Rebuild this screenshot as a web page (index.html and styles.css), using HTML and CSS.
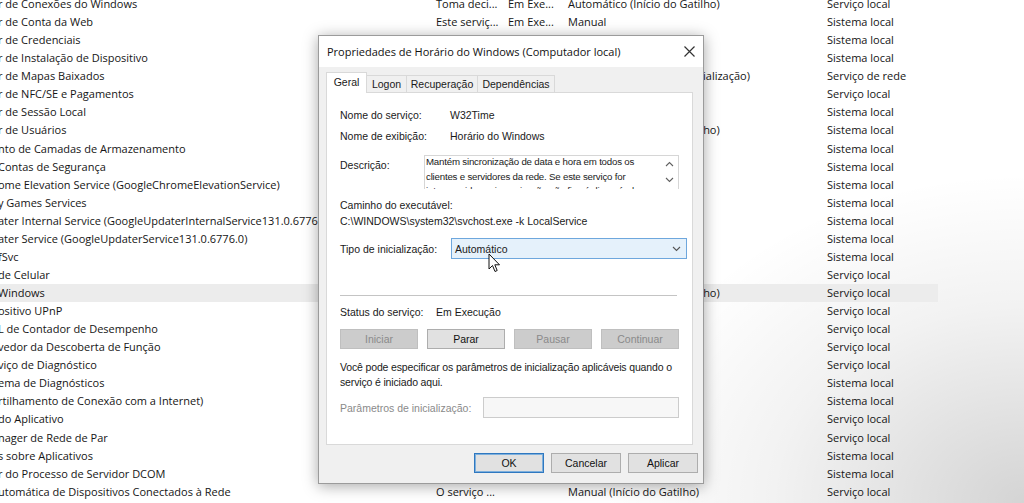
FILE: index.html
```html
<!DOCTYPE html>
<html lang="pt-BR">
<head>
<meta charset="utf-8">
<title>Serviços</title>
<link rel="stylesheet" href="styles.css">
</head>
<body>
<div class="services">
  <div class="row"><span>r de Conexões do Windows</span><span>Toma deci...</span><span>Em Exe...</span><span>Automático (Início do Gatilho)</span><span>Serviço local</span></div>
  <div class="row"><span>r de Conta da Web</span><span>Este serviç...</span><span>Em Exe...</span><span>Manual</span><span>Sistema local</span></div>
  <div class="row"><span>r de Credenciais</span><span></span><span></span><span></span><span>Sistema local</span></div>
  <div class="row"><span>r de Instalação de Dispositivo</span><span></span><span></span><span></span><span>Sistema local</span></div>
  <div class="row"><span>r de Mapas Baixados</span><span></span><span></span><span>Automático (Atraso na Inicialização)</span><span>Serviço de rede</span></div>
  <div class="row"><span>r de NFC/SE e Pagamentos</span><span></span><span></span><span></span><span>Serviço local</span></div>
  <div class="row"><span>r de Sessão Local</span><span></span><span></span><span></span><span>Sistema local</span></div>
  <div class="row"><span>r de Usuários</span><span></span><span></span><span>Automático (Início do Gatilho)</span><span>Sistema local</span></div>
  <div class="row"><span>nto de Camadas de Armazenamento</span><span></span><span></span><span></span><span>Sistema local</span></div>
  <div class="row"><span>Contas de Segurança</span><span></span><span></span><span></span><span>Sistema local</span></div>
  <div class="row"><span>ome Elevation Service (GoogleChromeElevationService)</span><span></span><span></span><span></span><span>Sistema local</span></div>
  <div class="row"><span>y Games Services</span><span></span><span></span><span></span><span>Sistema local</span></div>
  <div class="row"><span>ater Internal Service (GoogleUpdaterInternalService131.0.6776.0)</span><span></span><span></span><span></span><span>Sistema local</span></div>
  <div class="row"><span>ater Service (GoogleUpdaterService131.0.6776.0)</span><span></span><span></span><span></span><span>Sistema local</span></div>
  <div class="row"><span>fSvc</span><span></span><span></span><span></span><span>Sistema local</span></div>
  <div class="row"><span>de Celular</span><span></span><span></span><span></span><span>Serviço local</span></div>
  <div class="row sel"><span>Windows</span><span></span><span></span><span>Automático (Início do Gatilho)</span><span>Serviço local</span></div>
  <div class="row"><span>ositivo UPnP</span><span></span><span></span><span></span><span>Serviço local</span></div>
  <div class="row"><span>L de Contador de Desempenho</span><span></span><span></span><span></span><span>Serviço local</span></div>
  <div class="row"><span>vedor da Descoberta de Função</span><span></span><span></span><span></span><span>Serviço local</span></div>
  <div class="row"><span>viço de Diagnóstico</span><span></span><span></span><span></span><span>Serviço local</span></div>
  <div class="row"><span>ema de Diagnósticos</span><span></span><span></span><span></span><span>Sistema local</span></div>
  <div class="row"><span>rtilhamento de Conexão com a Internet)</span><span></span><span></span><span></span><span>Sistema local</span></div>
  <div class="row"><span>do Aplicativo</span><span></span><span></span><span></span><span>Serviço local</span></div>
  <div class="row"><span>nager de Rede de Par</span><span></span><span></span><span></span><span>Serviço local</span></div>
  <div class="row"><span>s sobre Aplicativos</span><span></span><span></span><span></span><span>Sistema local</span></div>
  <div class="row"><span>r do Processo de Servidor DCOM</span><span></span><span></span><span></span><span>Sistema local</span></div>
  <div class="row"><span>utomática de Dispositivos Conectados à Rede</span><span>O serviço ...</span><span></span><span>Manual (Início do Gatilho)</span><span>Serviço local</span></div>
</div>

<div class="dialog">
  <div class="titlebar">
    <span class="title">Propriedades de Horário do Windows (Computador local)</span>
    <svg class="close" width="11" height="11" viewBox="0 0 11 11"><path d="M0.5 0.5 L10.5 10.5 M10.5 0.5 L0.5 10.5" stroke="#333" stroke-width="1.2" fill="none"/></svg>
  </div>
  <div class="dbody">
    <div class="tabs">
      <div class="tab active t1">Geral</div>
      <div class="tab t2">Logon</div>
      <div class="tab t3">Recuperação</div>
      <div class="tab t4">Dependências</div>
    </div>
    <div class="panel">
      <div class="line"><span class="lbl w110">Nome do serviço:</span><span>W32Time</span></div>
      <div class="line mt5"><span class="lbl w110">Nome de exibição:</span><span>Horário do Windows</span></div>
      <div class="descrow">
        <span class="lbl w84 desclbl">Descrição:</span>
        <div class="descbox">
          <div class="desctext">Mantém sincronização de data e hora em todos os clientes e servidores da rede. Se este serviço for interrompido, a sincronização não ficará disponível para eles.</div>
          <div class="scroll">
            <svg width="9" height="6" viewBox="0 0 9 6"><path d="M1 5 L4.5 1.5 L8 5" stroke="#606060" stroke-width="1.1" fill="none"/></svg>
            <svg width="9" height="6" viewBox="0 0 9 6"><path d="M1 1 L4.5 4.5 L8 1" stroke="#606060" stroke-width="1.1" fill="none"/></svg>
          </div>
        </div>
      </div>
      <div class="line mt8">Caminho do executável:</div>
      <div class="line">C:\WINDOWS\system32\svchost.exe -k LocalService</div>
      <div class="comborow">
        <span class="lbl w111">Tipo de inicialização:</span>
        <div class="combo"><span>Automático</span>
          <svg width="9" height="6" viewBox="0 0 9 6"><path d="M1 1 L4.5 4.5 L8 1" stroke="#555" stroke-width="1.1" fill="none"/></svg>
        </div>
      </div>
      <div class="sep"></div>
      <div class="line mt8"><span class="lbl w96">Status do serviço:</span><span>Em Execução</span></div>
      <div class="svcbtns">
        <div class="btn disabled">Iniciar</div>
        <div class="btn">Parar</div>
        <div class="btn disabled">Pausar</div>
        <div class="btn disabled">Continuar</div>
      </div>
      <p class="hint">Você pode especificar os parâmetros de inicialização aplicáveis quando o serviço é iniciado aqui.</p>
      <div class="paramrow">
        <span class="lbl w143 dim">Parâmetros de inicialização:</span>
        <div class="param"></div>
      </div>
    </div>
    <div class="footer">
      <div class="btn fbtn default">OK</div>
      <div class="btn fbtn">Cancelar</div>
      <div class="btn fbtn">Aplicar</div>
    </div>
  </div>
</div>

<svg class="cursor" width="13" height="20" viewBox="0 0 13 20">
  <path d="M1 1 L1 16 L4.5 12.5 L7 18.5 L9.2 17.5 L6.8 11.8 L11.5 11.8 Z" fill="#fff" stroke="#111" stroke-width="1" stroke-linejoin="round"/>
</svg>
</body>
</html>
```

FILE: styles.css
```css
html, body {
  margin: 0;
  padding: 0;
}
body {
  width: 1024px;
  height: 503px;
  overflow: hidden;
  position: relative;
  background:
    radial-gradient(ellipse 420px 330px at 100% 100%, rgba(0,0,0,0.17), rgba(0,0,0,0.05) 60%, rgba(0,0,0,0) 100%),
    #ffffff;
  font-family: "Open Sans", "Noto Sans", sans-serif;
  color: #151515;
}

/* background services list */
.services {
  margin-top: -5px;
  margin-left: -2px;
  width: 940px;
  font-size: 11px;
}
.row {
  display: grid;
  grid-template-columns: 438px 72px 60px 259px 1fr;
  height: 18.07px;
  align-items: center;
  white-space: nowrap;
}
.row > span {
  line-height: 18px;
}
.row.sel {
  background: #ececec;
}

/* dialog window */
.dialog {
  position: absolute;
  left: 318px;
  top: 35px;
  width: 386px;
  height: 449px;
  box-sizing: border-box;
  border: 1px solid #9b9b9b;
  background: #f0f0f0;
  box-shadow: 0 2px 14px rgba(0,0,0,0.35);
  display: flex;
  flex-direction: column;
}
.titlebar {
  height: 31px;
  flex: none;
  background: #ffffff;
  display: flex;
  align-items: center;
  justify-content: space-between;
  padding: 0 8px 0 8px;
  font-size: 11px;
  color: #111;
}
.close {
  display: block;
}
.dbody {
  flex: 1;
  padding: 5px 5px 9px 7px;
  display: flex;
  flex-direction: column;
  font-family: "Liberation Sans", Arial, sans-serif;
  font-size: 10.5px;
  color: #1a1a1a;
}
.tabs {
  display: flex;
  align-items: flex-end;
  height: 20px;
  position: relative;
  z-index: 1;
}
.tab {
  box-sizing: border-box;
  height: 17px;
  border: 1px solid #d9d9d9;
  border-bottom: none;
  margin-left: -1px;
  background: #f0f0f0;
  display: flex;
  align-items: center;
  justify-content: center;
}
.tab.active {
  height: 21px;
  margin-bottom: -1px;
  background: #ffffff;
  margin-left: 0;
  align-items: flex-start;
  padding-top: 3px;
}
.t1 { width: 41px; }
.t2 { width: 41px; }
.t3 { width: 72px; }
.t4 { width: 78px; }

.panel {
  box-sizing: border-box;
  width: 367px;
  height: 353px;
  background: #ffffff;
  border: 1px solid #d9d9d9;
  padding: 14px 0 0 13px;
}
.line {
  height: 16px;
  display: flex;
  align-items: center;
  white-space: nowrap;
}
.mt5 { margin-top: 5px; }
.mt8 { margin-top: 8px; }
.lbl { flex: none; }
.w84 { width: 84px; }
.w96 { width: 96px; }
.w110 { width: 110px; }
.w111 { width: 111px; }
.w143 { width: 143px; }
.dim { color: #8a8a8a; }

.descrow {
  margin-top: 11px;
  display: flex;
  height: 34px;
}
.desclbl {
  padding-top: 4px;
}
.descbox {
  box-sizing: border-box;
  width: 255px;
  height: 34px;
  border: 1px solid #d6d6d6;
  border-bottom: none;
  display: flex;
  overflow: hidden;
}
.desctext {
  flex: 1;
  padding: 0 0 0 1px;
  font-size: 9.7px;
  letter-spacing: -0.2px;
  line-height: 14.5px;
  margin-top: -1px;
}
.scroll {
  width: 17px;
  flex: none;
  display: flex;
  flex-direction: column;
  align-items: center;
  gap: 10px;
  padding-top: 5px;
}
.scroll svg { display: block; }

.comborow {
  margin-top: 9px;
  height: 21px;
  display: flex;
  align-items: center;
}
.combo {
  box-sizing: border-box;
  width: 236px;
  height: 21px;
  background: #e5f1fb;
  border: 1px solid #6ea7dd;
  display: flex;
  align-items: center;
  justify-content: space-between;
  padding: 0 5px 0 3px;
}
.combo svg { display: block; }

.sep {
  margin-top: 36px;
  width: 337px;
  height: 1px;
  background: #c4c4c4;
}

.svcbtns {
  margin-top: 9px;
  display: grid;
  grid-template-columns: repeat(4, 78px);
  column-gap: 9px;
}
.btn {
  box-sizing: border-box;
  height: 20px;
  background: #e1e1e1;
  border: 1px solid #adadad;
  display: flex;
  align-items: center;
  justify-content: center;
  color: #111;
}
.btn.disabled {
  background: #cccccc;
  border-color: #bfbfbf;
  color: #8a8a8a;
}
.hint {
  margin: 11px 0 0 0;
  width: 345px;
  letter-spacing: -0.15px;
  line-height: 15px;
}
.paramrow {
  margin-top: 7px;
  height: 21px;
  display: flex;
  align-items: center;
}
.param {
  box-sizing: border-box;
  width: 196px;
  height: 21px;
  border: 1px solid #cccccc;
  background: #f7f7f7;
}

.footer {
  margin-top: 8px;
  display: flex;
  justify-content: flex-end;
  gap: 7px;
}
.fbtn {
  width: 70px;
}
.fbtn.default {
  border: 1px solid #2f78c0;
  box-shadow: inset 0 0 0 1px #7eb0dd;
}

.cursor {
  position: absolute;
  left: 488px;
  top: 253px;
}
```
